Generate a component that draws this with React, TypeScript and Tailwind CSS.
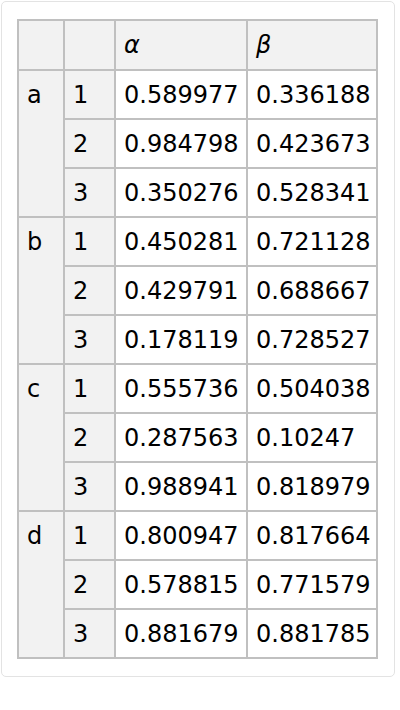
import React from "react";

const groups: { label: string; rows: [string, string][] }[] = [
  { label: "a", rows: [["0.589977", "0.336188"], ["0.984798", "0.423673"], ["0.350276", "0.528341"]] },
  { label: "b", rows: [["0.450281", "0.721128"], ["0.429791", "0.688667"], ["0.178119", "0.728527"]] },
  { label: "c", rows: [["0.555736", "0.504038"], ["0.287563", "0.10247"], ["0.988941", "0.818979"]] },
  { label: "d", rows: [["0.800947", "0.817664"], ["0.578815", "0.771579"], ["0.881679", "0.881785"]] },
];

const cellBase = "border border-[#c0c0c0] p-0 align-top";
const inner = "h-[47px] px-2 flex items-center whitespace-nowrap";
const headInner = "h-[48px] px-2 flex items-center whitespace-nowrap";

export default function App() {
  return (
    <div className="p-px bg-white" style={{ fontFamily: '"DejaVu Sans", Verdana, sans-serif' }}>
      <div className="w-[394px] border border-[#e3e3e3] rounded-[5px] pl-[15px] pt-[17px] pb-[17px] bg-white">
        <table className="table-fixed border-separate border-spacing-0 border border-[#c0c0c0] w-[361px] text-[24px] leading-[28px] text-black">
          <colgroup>
            <col className="w-[46px]" />
            <col className="w-[51px]" />
            <col className="w-[132px]" />
            <col className="w-[130px]" />
          </colgroup>
          <thead>
            <tr>
              <th className={`${cellBase} bg-[#f2f2f2] font-normal`}><div className={headInner}></div></th>
              <th className={`${cellBase} bg-[#f2f2f2] font-normal`}><div className={headInner}></div></th>
              <th className={`${cellBase} bg-[#f2f2f2] font-normal text-left`}><div className={`${headInner} italic`}>α</div></th>
              <th className={`${cellBase} bg-[#f2f2f2] font-normal text-left`}><div className={`${headInner} italic`}>β</div></th>
            </tr>
          </thead>
          <tbody>
            {groups.map((g) =>
              g.rows.map((r, i) => (
                <tr key={g.label + i}>
                  {i === 0 && (
                    <td rowSpan={3} className={`${cellBase} bg-[#f2f2f2]`}>
                      <div className={inner}>{g.label}</div>
                    </td>
                  )}
                  <td className={`${cellBase} bg-[#f2f2f2]`}><div className={inner}>{i + 1}</div></td>
                  <td className={`${cellBase} bg-white`}><div className={inner}>{r[0]}</div></td>
                  <td className={`${cellBase} bg-white`}><div className={inner}>{r[1]}</div></td>
                </tr>
              ))
            )}
          </tbody>
        </table>
      </div>
    </div>
  );
}
